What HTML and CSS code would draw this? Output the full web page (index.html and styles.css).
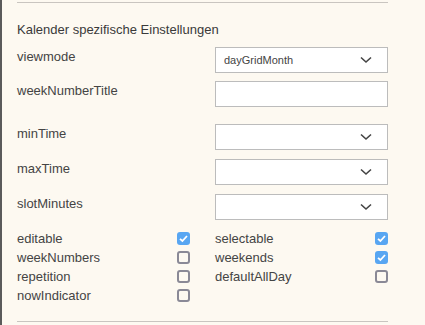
FILE: index.html
```html
<!DOCTYPE html>
<html lang="de">
<head>
<meta charset="utf-8">
<link rel="stylesheet" href="styles.css">
</head>
<body>
<div class="panel">
  <div class="rule"></div>
  <h3 class="heading">Kalender spezifische Einstellungen</h3>
  <div class="fields">
    <div class="field f1">
      <label class="lbl">viewmode</label>
      <div class="select"><span class="val">dayGridMonth</span><svg class="chev" width="12" height="8" viewBox="0 0 12 8"><path d="M1 1.5 L6 6 L11 1.5" fill="none" stroke="#444" stroke-width="1.6"/></svg></div>
    </div>
    <div class="field f2">
      <label class="lbl">weekNumberTitle</label>
      <div class="input"></div>
    </div>
    <div class="field f3">
      <label class="lbl">minTime</label>
      <div class="select"><span class="val"></span><svg class="chev" width="12" height="8" viewBox="0 0 12 8"><path d="M1 1.5 L6 6 L11 1.5" fill="none" stroke="#444" stroke-width="1.6"/></svg></div>
    </div>
    <div class="field f4">
      <label class="lbl">maxTime</label>
      <div class="select"><span class="val"></span><svg class="chev" width="12" height="8" viewBox="0 0 12 8"><path d="M1 1.5 L6 6 L11 1.5" fill="none" stroke="#444" stroke-width="1.6"/></svg></div>
    </div>
    <div class="field f5">
      <label class="lbl">slotMinutes</label>
      <div class="select"><span class="val"></span><svg class="chev" width="12" height="8" viewBox="0 0 12 8"><path d="M1 1.5 L6 6 L11 1.5" fill="none" stroke="#444" stroke-width="1.6"/></svg></div>
    </div>
  </div>
  <div class="checks">
    <div class="col">
      <div class="chk"><span>editable</span><span class="box on"><svg width="13" height="13" viewBox="0 0 13 13"><path d="M3 6.8 L5.4 9 L10 4" fill="none" stroke="#fff" stroke-width="1.8"/></svg></span></div>
      <div class="chk"><span>weekNumbers</span><span class="box"></span></div>
      <div class="chk"><span>repetition</span><span class="box"></span></div>
      <div class="chk"><span>nowIndicator</span><span class="box"></span></div>
    </div>
    <div class="col">
      <div class="chk"><span>selectable</span><span class="box on"><svg width="13" height="13" viewBox="0 0 13 13"><path d="M3 6.8 L5.4 9 L10 4" fill="none" stroke="#fff" stroke-width="1.8"/></svg></span></div>
      <div class="chk"><span>weekends</span><span class="box on"><svg width="13" height="13" viewBox="0 0 13 13"><path d="M3 6.8 L5.4 9 L10 4" fill="none" stroke="#fff" stroke-width="1.8"/></svg></span></div>
      <div class="chk"><span>defaultAllDay</span><span class="box"></span></div>
    </div>
  </div>
  <div class="rule bottom"></div>
</div>
</body>
</html>
```
FILE: styles.css
```css
html, body {
  margin: 0;
  padding: 0;
  background: #fdf9f1;
}
body {
  font-family: "Liberation Sans", Arial, sans-serif;
  font-size: 13px;
  color: #444;
  height: 325px;
  overflow: hidden;
}
.panel {
  border-left: 2px solid #5b5b5b;
  padding: 2px 37px 0 15px;
  height: 323px;
}
.rule {
  height: 1px;
  background: #c9c5c0;
}
.heading {
  margin: 19px 0 0;
  font-size: 13px;
  font-weight: normal;
  line-height: 16px;
  color: #3a3a3a;
}
.fields {
  margin-top: 9px;
}
.field {
  display: grid;
  grid-template-columns: 198px 173px;
  align-items: start;
}
.lbl {
  padding-top: 2px;
  line-height: 16px;
}
.f2 { margin-top: 8px; }
.f3 { margin-top: 17px; }
.f3 .lbl { padding-top: 2px; }
.f4 { margin-top: 9px; }
.f4 .lbl { padding-top: 2px; }
.f5 { margin-top: 9px; }
.f5 .lbl { padding-top: 2px; }
.select, .input {
  height: 24px;
  border: 1px solid #bcbcbc;
  background: #fff;
  box-sizing: content-box;
  display: flex;
  align-items: center;
  position: relative;
}
.val {
  padding-left: 8px;
  font-size: 11px;
  color: #444;
  flex: 1;
}
.chev {
  margin-right: 15px;
}
.checks {
  margin-top: 9px;
  display: grid;
  grid-template-columns: 198px 173px;
}
.chk {
  display: flex;
  justify-content: space-between;
  align-items: center;
  height: 19px;
  line-height: 16px;
}
.col:first-child .chk { padding-right: 25px; }
.box {
  width: 13px;
  height: 13px;
  box-sizing: border-box;
  border: 2px solid #8a8996;
  border-radius: 3px;
  display: block;
}
.box.on {
  border: none;
  background: #58a6f2;
}
.box svg { display: block; }
.bottom {
  margin-top: 16px;
}
```
